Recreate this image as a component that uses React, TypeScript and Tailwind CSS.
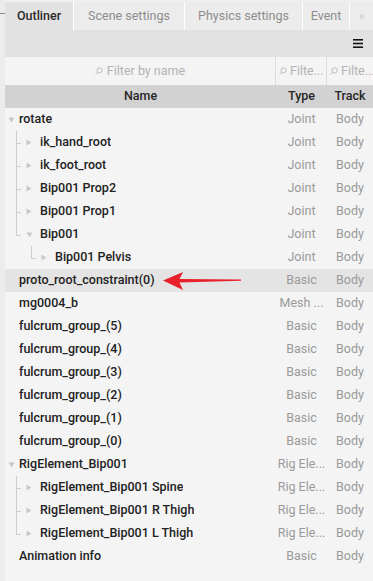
import { Fragment } from 'react'

type Row = {
  name: string
  type: string
  arrow?: 'open' | 'closed'
  lines?: string[] // guide at each ancestor level: mid | last | none
  selected?: boolean
}

const ROWS: Row[] = [
  { name: 'rotate', type: 'Joint', arrow: 'open' },
  { name: 'ik_hand_root', type: 'Joint', arrow: 'closed', lines: ['mid'] },
  { name: 'ik_foot_root', type: 'Joint', arrow: 'closed', lines: ['mid'] },
  { name: 'Bip001 Prop2', type: 'Joint', arrow: 'closed', lines: ['mid'] },
  { name: 'Bip001 Prop1', type: 'Joint', arrow: 'closed', lines: ['mid'] },
  { name: 'Bip001', type: 'Joint', arrow: 'open', lines: ['last'] },
  { name: 'Bip001 Pelvis', type: 'Joint', arrow: 'closed', lines: ['none', 'last'] },
  { name: 'proto_root_constraint(0)', type: 'Basic', selected: true },
  { name: 'mg0004_b', type: 'Mesh ...' },
  { name: 'fulcrum_group_(5)', type: 'Basic' },
  { name: 'fulcrum_group_(4)', type: 'Basic' },
  { name: 'fulcrum_group_(3)', type: 'Basic' },
  { name: 'fulcrum_group_(2)', type: 'Basic' },
  { name: 'fulcrum_group_(1)', type: 'Basic' },
  { name: 'fulcrum_group_(0)', type: 'Basic' },
  { name: 'RigElement_Bip001', type: 'Rig Ele...', arrow: 'open' },
  { name: 'RigElement_Bip001 Spine', type: 'Rig Ele...', arrow: 'closed', lines: ['mid'] },
  { name: 'RigElement_Bip001 R Thigh', type: 'Rig Ele...', arrow: 'closed', lines: ['mid'] },
  { name: 'RigElement_Bip001 L Thigh', type: 'Rig Ele...', arrow: 'closed', lines: ['last'] },
  { name: 'Animation info', type: 'Basic' },
]

// tab widths follow the screenshot
const TABS = [
  { label: 'Outliner', w: 'w-[69px]' },
  { label: 'Scene settings', w: 'w-[111px]' },
  { label: 'Physics settings', w: 'w-[118px]' },
  { label: 'Event', w: 'w-[47px]' },
]

function SearchIcon() {
  return (
    <svg width="8" height="8" viewBox="0 0 8 8" className="shrink-0">
      <circle cx="4.6" cy="3.4" r="2.6" fill="none" stroke="#b5b5b5" strokeWidth="0.9" />
      <line x1="2.7" y1="5.3" x2="0.6" y2="7.4" stroke="#b5b5b5" strokeWidth="1" />
    </svg>
  )
}

// tree guide for one ancestor level (15px wide)
function Guide({ kind }: { kind: string }) {
  if (kind === 'none') return <span className="h-full w-[15px] shrink-0" />
  return (
    <span className="relative h-full w-[15px] shrink-0">
      <span
        className={`absolute left-[11px] top-0 w-px bg-[#cdcdcd] ${kind === 'last' ? 'h-[12px]' : 'h-full'}`}
      />
      <span className="absolute left-[11px] top-[12px] h-px w-[5px] bg-[#cdcdcd]" />
    </span>
  )
}

function Arrow({ kind, nested }: { kind?: 'open' | 'closed'; nested: boolean }) {
  return (
    <span className={`flex shrink-0 items-center ${nested ? 'w-[20px] pl-[6px]' : 'w-[14px] pl-[3px]'}`}>
      {kind === 'open' && (
        <svg width="7" height="6" viewBox="0 0 7 6">
          <path d="M0.5 0.5 L6.5 0.5 L3.5 5.5 Z" fill="#c8c8c8" />
        </svg>
      )}
      {kind === 'closed' && (
        <svg width="6" height="7" viewBox="0 0 6 7">
          <path d="M0.5 0.5 L5.5 3.5 L0.5 6.5 Z" fill="#c8c8c8" />
        </svg>
      )}
    </span>
  )
}

export default function App() {
  return (
    <div
      className="flex h-[581px] w-[373px] overflow-hidden bg-[#e9e9e9] text-[12.5px] text-[#222]"
      style={{ fontFamily: 'Roboto, "Noto Sans", sans-serif' }}
    >
      {/* sliver of the neighbouring panel */}
      <div className="flex w-[5px] shrink-0 flex-col bg-[#ececec]">
        <div className="mt-[13px] h-px bg-[#8a8a8a]" />
      </div>

      <div className="flex min-w-0 flex-1 flex-col bg-[#f4f4f4]">
        {/* tabs */}
        <div className="flex h-[30px] shrink-0 items-end bg-[#f0f0f0] pt-[2px]">
          {TABS.map((t, i) => (
            <div
              key={t.label}
              className={`flex h-[28px] shrink-0 items-center justify-center whitespace-nowrap border-r border-white ${t.w} ${
                i === 0 ? 'bg-[#e2e2e2] font-medium text-[#2a2a2a]' : 'bg-[#ececec] text-[#8c8c8c]'
              }`}
            >
              {t.label}
            </div>
          ))}
          <div className="flex h-[28px] flex-1 items-center justify-center bg-[#ececec] text-[13px] text-[#cbcbcb]">
            »
          </div>
        </div>

        {/* toolbar */}
        <div className="flex h-[27px] shrink-0 items-center justify-end bg-[#e2e2e2] pr-[10px]">
          <svg width="10" height="9" viewBox="0 0 10 9">
            <rect x="0" y="0" width="10" height="1.6" fill="#111" />
            <rect x="0" y="3.7" width="10" height="1.6" fill="#111" />
            <rect x="0" y="7.4" width="10" height="1.6" fill="#111" />
          </svg>
        </div>

        {/* filters */}
        <div className="grid h-[28px] shrink-0 grid-cols-[1fr_51px_46px] bg-[#f4f4f4] text-[#b3b3b3]">
          <div className="flex items-center justify-center gap-[4px] border-r border-[#dcdcdc]">
            <SearchIcon />
            <span>Filter by name</span>
          </div>
          <div className="flex items-center gap-[3px] overflow-hidden whitespace-nowrap border-r border-[#dcdcdc] pl-[3px]">
            <SearchIcon />
            <span>Filte...</span>
          </div>
          <div className="flex items-center gap-[3px] overflow-hidden whitespace-nowrap pl-[3px]">
            <SearchIcon />
            <span>Filte...</span>
          </div>
        </div>

        {/* header */}
        <div className="grid h-[23px] shrink-0 grid-cols-[1fr_51px_46px] bg-[#d2d2d2] font-medium text-[#262626]">
          <div className="flex items-center justify-center">Name</div>
          <div className="flex items-center justify-center">Type</div>
          <div className="flex items-center justify-center">Track</div>
        </div>

        {/* rows */}
        <div className="flex flex-col">
          {ROWS.map((r) => (
            <div
              key={r.name}
              className={`relative grid h-[23px] grid-cols-[1fr_51px_46px] ${r.selected ? 'bg-[#e4e4e4]' : ''}`}
            >
              <div className="flex h-full min-w-0 items-center">
                {(r.lines ?? []).map((l, i) => (
                  <Fragment key={i}>
                    <Guide kind={l} />
                  </Fragment>
                ))}
                <Arrow kind={r.arrow} nested={!!r.lines} />
                <span className="truncate font-medium">{r.name}</span>
              </div>
              <div className="flex items-center justify-center whitespace-nowrap text-[#9a9a9a]">{r.type}</div>
              <div className="flex items-center justify-center whitespace-nowrap text-[#9a9a9a]">Body</div>
              {r.selected && (
                <svg
                  width="80"
                  height="20"
                  viewBox="0 0 80 20"
                  className="absolute left-[158px] top-[2px]"
                >
                  <path d="M0 9.5 L20 1 L16.5 8 L78 8.6 L78 9.8 L16.5 11.6 L20 19 Z" fill="#e8202a" />
                </svg>
              )}
            </div>
          ))}
        </div>
      </div>
    </div>
  )
}
